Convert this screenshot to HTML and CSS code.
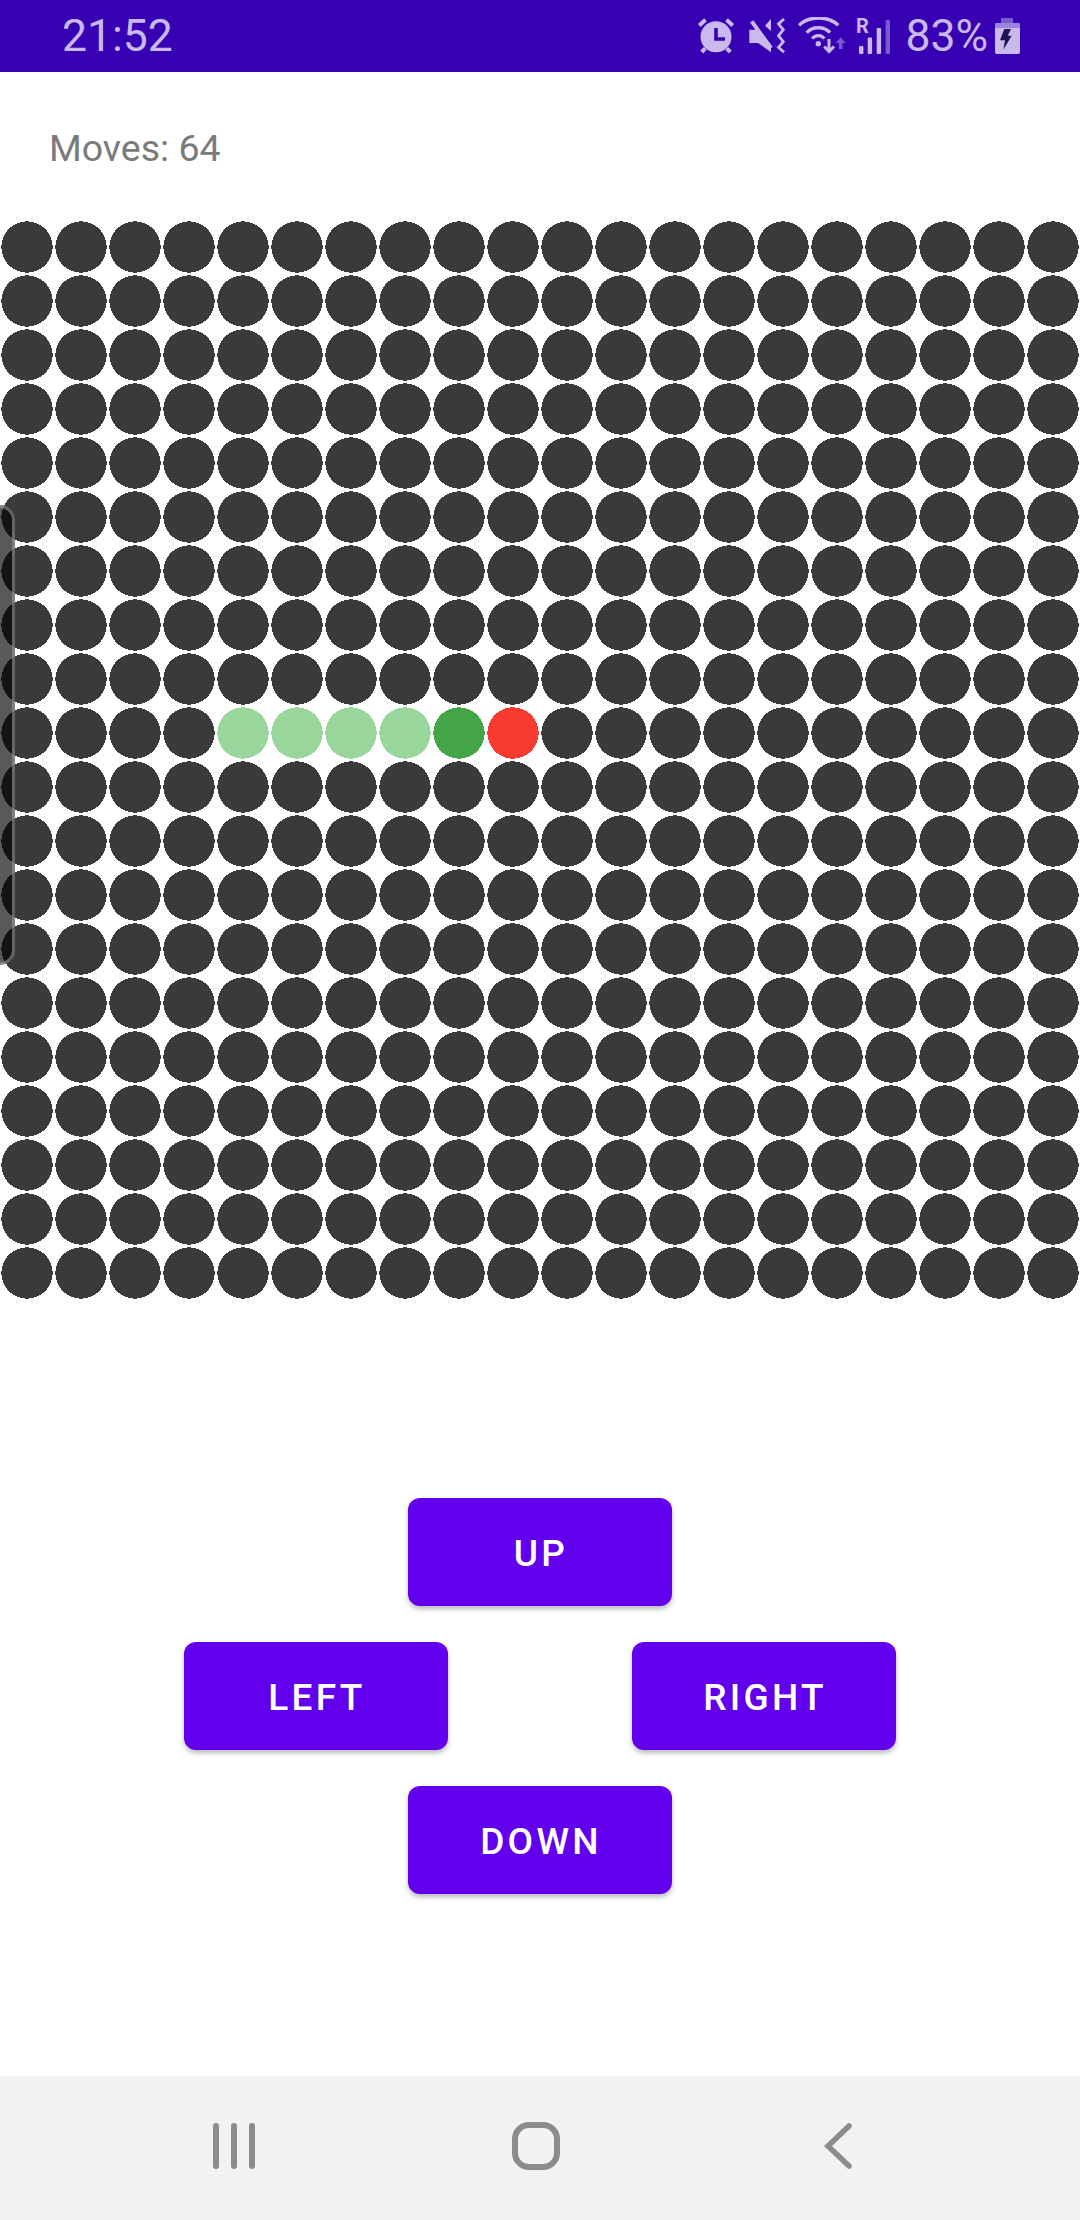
FILE: index.html
```html
<!DOCTYPE html>
<html>
<head>
    <title>Snake</title>
    <link rel="stylesheet" href="styles.css">
</head>
<body>
    <div class="status-bar">
        <span class="clock">21:52</span>
        <div class="status-icons">
            <svg class="icon-alarm" width="38" height="36" viewBox="0 0 38 36">
                <circle cx="19" cy="18.7" r="15.5" fill="#c9b9ec"/>
                <path d="M2.3 7.5L8.5 1.7M29.5 1.7L35.7 7.5M4.7 34L8.3 30.3M33.4 34L29.7 30.3" stroke="#c9b9ec" stroke-width="4" fill="none"/>
                <path d="M19 10V21H28" stroke="#3700b3" stroke-width="3.6" fill="none"/>
            </svg>
            <svg class="icon-mute" width="38" height="36" viewBox="0 0 38 36">
                <path d="M0.3 11.7H8.7L22 30V34.3L9 25H0.3Z" fill="#c9b9ec"/>
                <path d="M2.7 3.3L22 30" stroke="#c9b9ec" stroke-width="4" fill="none"/>
                <path d="M22 1L16 7.7L22 13Z" fill="#c9b9ec"/>
                <path d="M35 1L29.5 6L34.3 11.7L29.5 17.7L34.3 23.7L29.5 29.3L35 34.3" stroke="#c9b9ec" stroke-width="2.8" fill="none"/>
            </svg>
            <svg class="icon-wifi" width="50" height="38" viewBox="0 0 50 38">
                <path d="M1 8.3C11 -1.5 30 -1.5 40.3 8.3" stroke="#c9b9ec" stroke-width="3.4" fill="none"/>
                <path d="M8.7 15.7C14 9 26.5 9 32 15.7" stroke="#c9b9ec" stroke-width="3.4" fill="none"/>
                <path d="M14.3 21.7C17 17.5 23.5 17.5 26.3 21.7" stroke="#c9b9ec" stroke-width="3.2" fill="none"/>
                <circle cx="20.3" cy="26.7" r="2.7" fill="#c9b9ec"/>
                <path d="M31 22V34M26.3 29.5L31 34.5L36 29.5" stroke="#c9b9ec" stroke-width="3" fill="none"/>
                <path d="M42.7 24V32" stroke="#7a5acb" stroke-width="3.4" fill="none"/>
                <path d="M37.7 26L42.7 20.5L47.7 26Z" fill="#7a5acb"/>
            </svg>
            <svg class="icon-signal" width="34" height="40" viewBox="0 -4 34 40">
                <text class="roaming" x="0" y="15">R</text>
                <rect x="3" y="28" width="4.4" height="8" rx="1" fill="#c9b9ec"/>
                <rect x="11.7" y="19.5" width="4.4" height="16.5" rx="1" fill="#c9b9ec"/>
                <rect x="20.7" y="10" width="4.4" height="26" rx="1" fill="#c9b9ec"/>
                <rect x="29.6" y="2" width="4.4" height="34" rx="1" fill="#7a5acb"/>
            </svg>
            <span class="battery-text">83%</span>
            <svg class="icon-battery" width="25" height="36" viewBox="0 0 25 36">
                <rect x="6" y="0" width="12" height="6" fill="#7a5acb"/>
                <rect x="0" y="5" width="25" height="31" rx="2" fill="#c9b9ec"/>
                <path d="M0 10V7Q0 5 2 5H23Q25 5 25 7V10Z" fill="#9c84de"/>
                <path d="M9.3 11H16L12.7 17.7H16.7L8.3 31.7L10 22.3H5Z" fill="#1d1550"/>
            </svg>
        </div>
    </div>

    <p class="moves">Moves: 64</p>

    <svg id="board" class="board" viewBox="0 0 1080 1080"></svg>

    <div class="controls">
        <button class="move-btn" type="button">UP</button>
        <div class="controls-row">
            <button class="move-btn" type="button">LEFT</button>
            <button class="move-btn" type="button">RIGHT</button>
        </div>
        <button class="move-btn" type="button">DOWN</button>
    </div>

    <div class="nav-bar">
        <svg width="42" height="46" viewBox="0 0 42 46">
            <path d="M3 3V43M21 3V43M39 3V43" stroke="#8c8c8c" stroke-width="6" stroke-linecap="round"/>
        </svg>
        <svg width="48" height="48" viewBox="0 0 48 48">
            <rect x="3" y="3" width="42" height="42" rx="14" fill="none" stroke="#8c8c8c" stroke-width="6"/>
        </svg>
        <svg width="28" height="46" viewBox="0 0 28 46">
            <path d="M25 3L4 23L25 43" fill="none" stroke="#8c8c8c" stroke-width="5.5" stroke-linecap="round"/>
        </svg>
    </div>

    <div class="edge-handle"></div>

    <script src="board.js"></script>
</body>
</html>
```

FILE: styles.css
```css
body {
    font-family: Roboto, sans-serif;
    margin: 0;
    width: 1080px;
    height: 2220px;
    position: relative;
    overflow: hidden;
    display: flex;
    flex-direction: column;
    background-color: white;
}
.status-bar {
    height: 72px;
    flex-shrink: 0;
    background-color: #3700b3;
    color: #c9b9ec;
    font-size: 44.5px;
    display: flex;
    align-items: center;
    padding: 0 60px 0 62px;
}
.clock {
    line-height: 72px;
}
.status-icons {
    margin-left: auto;
    display: flex;
    align-items: center;
}
.icon-alarm {
    margin-right: 14px;
}
.icon-mute {
    margin-right: 11px;
}
.icon-wifi {
    margin-right: 8px;
}
.icon-signal {
    margin-top: -4px;
    margin-right: 15px;
}
.battery-text {
    margin-right: 7px;
}
.roaming {
    font-family: Roboto, sans-serif;
    font-size: 20px;
    font-weight: 700;
    fill: #c9b9ec;
}
.moves {
    margin: 0;
    padding: 54px 0 0 49px;
    height: 94px;
    font-size: 37.5px;
    line-height: 44px;
    color: #7a7a7a;
}
.board {
    display: block;
    width: 1080px;
    height: 1080px;
    flex-shrink: 0;
    shape-rendering: crispEdges;
}
.dot {
    fill: #3b393c;
}
.dot.trail {
    fill: #98d69b;
}
.dot.head {
    fill: #43a547;
}
.dot.food {
    fill: #f93b2f;
}
.controls {
    margin-top: 198px;
    display: flex;
    flex-direction: column;
    align-items: center;
    gap: 36px;
}
.controls-row {
    display: flex;
    gap: 184px;
}
.move-btn {
    width: 264px;
    height: 108px;
    padding: 3px 0 0 2px;
    border: none;
    border-radius: 12px;
    background-color: #6200ee;
    color: white;
    font-family: Roboto, sans-serif;
    font-size: 37px;
    font-weight: 500;
    letter-spacing: 3.3px;
    box-shadow: 0 3px 5px rgba(0, 0, 0, 0.28);
}
.nav-bar {
    margin-top: auto;
    height: 144px;
    box-sizing: border-box;
    padding: 0 0 5px 83px;
    background-color: #f2f2f2;
    display: grid;
    grid-template-columns: repeat(3, 302px);
    justify-items: center;
    align-items: center;
}
.edge-handle {
    position: absolute;
    left: 0;
    top: 505px;
    width: 12px;
    height: 454px;
    background-color: rgba(0, 0, 0, 0.65);
    border: 3px solid rgba(153, 153, 153, 0.6);
    border-left: none;
    border-radius: 0 15px 15px 0;
}
```

FILE: board.js
```js
const size = 20;
const cell = 54;
const board = document.getElementById("board");

// row 9 holds the snake: trail, head, then the food right after it
function dotClass(row, col) {
    if (row === 9 && col >= 4 && col <= 7) return "dot trail";
    if (row === 9 && col === 8) return "dot head";
    if (row === 9 && col === 9) return "dot food";
    return "dot";
}

for (let row = 0; row < size; row++) {
    for (let col = 0; col < size; col++) {
        const dot = document.createElementNS("http://www.w3.org/2000/svg", "circle");
        dot.setAttribute("cx", col * cell + cell / 2);
        dot.setAttribute("cy", row * cell + cell / 2);
        dot.setAttribute("r", 25.7);
        dot.setAttribute("class", dotClass(row, col));
        board.appendChild(dot);
    }
}
```
